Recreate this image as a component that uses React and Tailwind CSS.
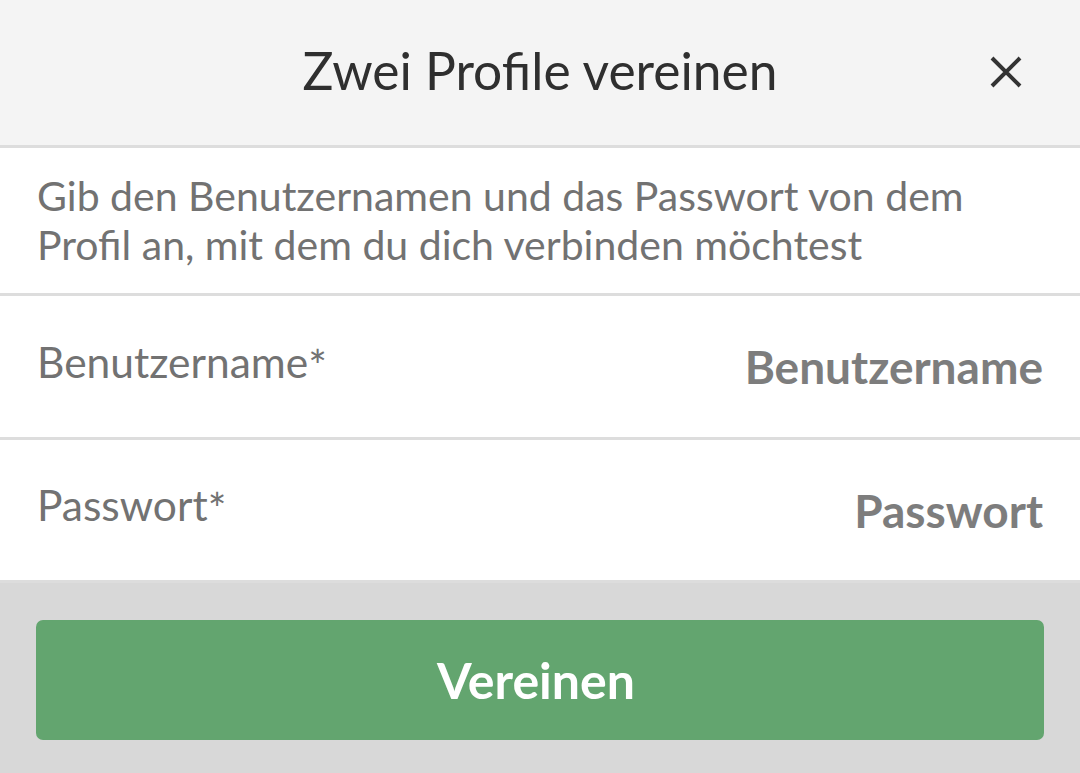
import React from "react";

const Field = ({ label, placeholder, type = "text", height }) => (
  <label
    className={`flex items-center justify-between border-b-[3px] border-[#dddddd] bg-white pl-[37px] pr-[37px] ${height}`}
  >
    <span className="-mt-[12px] text-[42.5px] text-[#727272]">
      {label}
      <span className="relative top-[4px] text-[44px]">*</span>
    </span>
    <input
      type={type}
      placeholder={placeholder}
      className="w-[560px] bg-transparent text-right text-[46px] font-bold text-[#7a7a7a] outline-none placeholder:text-[#7d7d7d]"
    />
  </label>
);

const App = () => {
  return (
    <main
      className="flex h-[773px] w-full flex-col bg-[#d8d8d8]"
      style={{ fontFamily: "Lato, 'Noto Sans', sans-serif" }}
    >
      {/* Header */}
      <header className="relative flex h-[148px] shrink-0 items-center justify-center border-b-[3px] border-[#dddddd] bg-[#f4f4f4]">
        <h1 className="-mt-[4px] text-[51.5px] text-[#2f2f2f]">Zwei Profile vereinen</h1>
        <button
          aria-label="Schließen"
          className="absolute right-[52px] top-[50px] flex h-[44px] w-[44px] items-center justify-center"
        >
          <svg width="32" height="32" viewBox="0 0 32 32" fill="none">
            <path d="M2 2L30 30M30 2L2 30" stroke="#333333" strokeWidth="4" />
          </svg>
        </button>
      </header>

      {/* Description */}
      <section className="flex h-[148px] shrink-0 items-center border-b-[3px] border-[#dddddd] bg-white px-[37px]">
        <p className="-mt-[2px] text-[41px] leading-[49px] text-[#727272]">
          Gib den Benutzernamen und das Passwort von dem Profil an, mit dem du dich verbinden möchtest
        </p>
      </section>

      <Field label="Benutzername" placeholder="Benutzername" height="h-[144px] shrink-0" />
      <Field label="Passwort" placeholder="Passwort" type="password" height="h-[143px] shrink-0" />

      {/* Action */}
      <div className="pl-[36px] pr-[36px] pt-[37px]">
        <button className="flex h-[120px] w-full items-center justify-center rounded-[7px] bg-[#63a56f] pr-[8px] text-[50px] font-bold text-white">
          Vereinen
        </button>
      </div>
    </main>
  );
};

export default App;
